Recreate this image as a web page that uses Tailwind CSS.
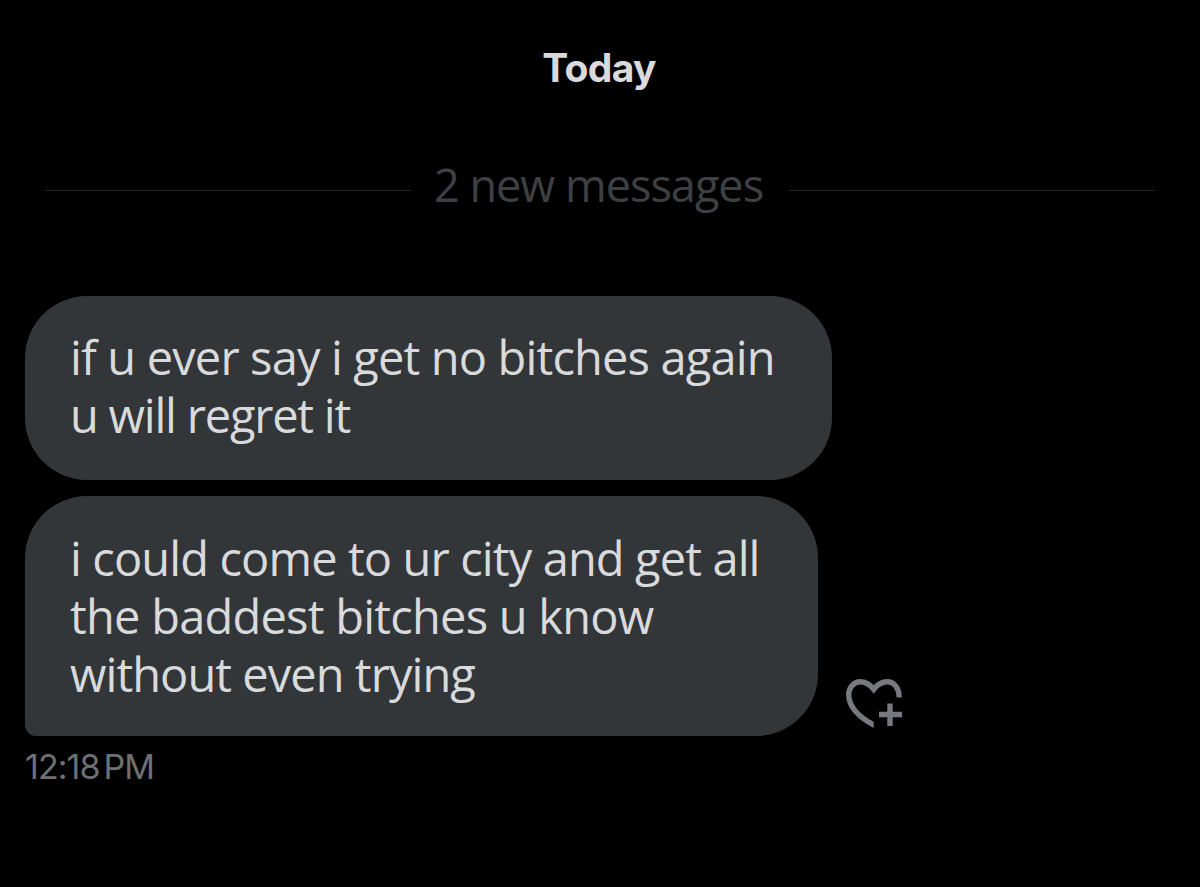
<!DOCTYPE html>
<html lang="en">
<head>
  <meta charset="UTF-8" />
  <meta name="viewport" content="width=device-width, initial-scale=1.0"/>
  <title>Messages</title>
  <script src="https://cdn.jsdelivr.net/npm/@tailwindcss/browser@4"></script>
</head>
<body class="bg-black h-screen overflow-hidden font-['Open_Sans',sans-serif] text-[#d9dadc]">
  <main class="flex flex-col pt-[44px]">
    <h1 class="text-center pr-[2px] font-['Inter',sans-serif] font-bold text-[39px] leading-[48px] tracking-[-0.7px]">Today</h1>

    <div class="mt-[66px] flex items-center h-[64px] px-[45px] gap-6">
      <div class="flex-1 h-px bg-[#202327]"></div>
      <span class="w-[328px] text-[45px] leading-[56px] -mt-[11px] -indent-[2px] tracking-[-0.98px] whitespace-nowrap text-[#3e4144]">2 new messages</span>
      <div class="flex-1 h-px bg-[#202327]"></div>
    </div>

    <section class="mt-[74px] pl-[25px] flex flex-col items-start gap-[16px] text-[47px] leading-[58px]">
      <div class="w-[807px] h-[184px] bg-[#333639] rounded-[62px] pl-[45px] pt-[32px] whitespace-nowrap">
        <p class="tracking-[-0.85px]">if u ever say i get no bitches again</p>
        <p class="tracking-[-1.22px]">u will regret it</p>
      </div>
      <div class="flex items-end gap-[28px]">
        <div class="w-[793px] h-[240px] bg-[#333639] rounded-[62px] rounded-bl-[11px] pl-[45px] pt-[33px] whitespace-nowrap">
          <p class="tracking-[-0.88px]">i could come to ur city and get all</p>
          <p class="tracking-[-0.76px]">the baddest bitches u know</p>
          <p class="tracking-[-0.95px]">without even trying</p>
        </div>
        <!-- add reaction -->
        <button class="mb-[7px]" aria-label="Add reaction">
          <svg class="block w-[56px] h-[50px]" viewBox="0 0 56 50" fill="none" stroke="#76797d" stroke-width="5.4">
            <clipPath id="leftHalf"><path d="M0 0H27.7V50H0Z"/></clipPath>
            <path d="M53 18.5C53.5 9 48 2.8 41 2.8C35.5 2.8 31.5 5.4 27.7 10.4C23.9 5.4 19.9 2.8 14.4 2.8C7.4 2.8 2.6 9 2.7 16"/>
            <path clip-path="url(#leftHalf)" d="M2.7 15.5C2.7 27 12 37.5 27.7 46L33 49"/>
            <path d="M44 24.5V47M33 35.5H56"/>
          </svg>
        </button>
      </div>
    </section>

    <p class="mt-[9px] pl-[25px] font-['Inter',sans-serif] text-[34px] leading-[44px] tracking-[-0.95px] [word-spacing:-4.5px] text-[#6e7073]">12:18 PM</p>
  </main>
</body>
</html>
